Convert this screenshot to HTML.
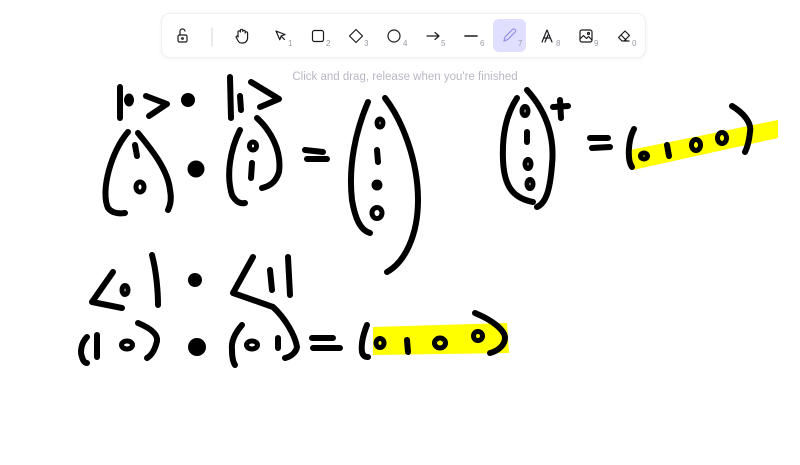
<!DOCTYPE html>
<html><head><meta charset="utf-8"><style>
html,body{margin:0;padding:0;background:#fff;width:800px;height:465px;overflow:hidden;font-family:"Liberation Sans",sans-serif}
.tb{position:absolute;left:162px;top:14px;width:483px;height:43px;background:#fff;border-radius:8px;box-shadow:0 0 0 1px #f0f0f3,0 1px 5px rgba(0,0,0,.09)}
.act{position:absolute;left:331px;top:5px;width:33px;height:33px;background:#e0dfff;border-radius:6px}
.hint{position:absolute;left:0;width:810px;top:71px;text-align:center;font-size:11.5px;color:#b8b8c4}
svg{position:absolute;left:0;top:0}
</style></head><body>
<div class="tb"><div class="act"></div></div>
<div class="hint">Click and drag, release when you're finished</div>
<svg width="800" height="465" viewBox="0 0 800 465">
<g fill="none" stroke="#1b1b1f" stroke-width="1.2" stroke-linecap="round" stroke-linejoin="round">
<rect x="178" y="35" width="9" height="7" rx="1.5"/><path d="M180 35v-3a2.5 2.5 0 0 1 5 -1"/><circle cx="182.5" cy="38.5" r=".8"/>
<path d="M212 28v18" stroke="#ddd"/>
<path d="M238 37v-5a1.2 1.2 0 0 1 2.4 0v-1.5a1.2 1.2 0 0 1 2.4 0v1a1.2 1.2 0 0 1 2.4 0v1.5a1.2 1.2 0 0 1 2.4 0v5a5 5 0 0 1 -5 5h-1a4 4 0 0 1 -3.4 -2l-2 -3.5a1.2 1.2 0 0 1 2 -1.2z"/>
<path d="M276 31l9 3.5-3.8 1.4-1.4 3.8z M281 36l3.5 3.5"/>
<rect x="312.5" y="30.5" width="11" height="11" rx="2"/>
<path d="M356 29.5l6.5 6.5-6.5 6.5-6.5-6.5z"/>
<circle cx="394" cy="36" r="6"/>
<path d="M427 36h12M435 32.5l4 3.5-4 3.5"/>
<path d="M465 36h12" stroke-width="1.6"/>
<path d="M504 41l1-4 7.5-7.5a1.8 1.8 0 0 1 2.6 2.6l-7.5 7.5z" stroke="#5b5bd6" stroke-opacity=".6"/>
<path d="M542 42l5-12 5 12M544 38h6M545 42l3-7"/>
<rect x="580" y="30" width="12" height="12" rx="2"/><path d="M580 39l3.5-3.5 3 3 2-2 3.5 3.5"/><circle cx="588.5" cy="33.5" r="1"/>
<path d="M622 41l-3.5-3.5 6.5-6.5 4.5 4.5-5.5 5.5zM621 35l5 5M622 41h7"/>
</g>
<g fill="#9a9aa3" font-size="8" font-family="Liberation Sans,sans-serif">
<text x="288" y="46">1</text><text x="326" y="46">2</text><text x="364" y="46">3</text><text x="403" y="46">4</text><text x="441" y="46">5</text><text x="480" y="46">6</text><text x="518" y="46">7</text><text x="556" y="46">8</text><text x="594" y="46">9</text><text x="632" y="46">0</text>
</g>
<g fill="#ffff00" stroke="none">
<path d="M630 150 L778 120 L778 138 L633 170 Z"/>
<path d="M373 327 L507 323 L509 353 L373 355 Z"/>
</g>
<g fill="none" stroke="#000" stroke-width="6" stroke-linecap="round" stroke-linejoin="round">
<path d="M120 87 L120 118"/><path d="M146 96 L167 104 L149 116"/>
<path d="M230 77 L231 118"/><path d="M240 96 L241 110"/><path d="M251 82 L279 99 L260 107"/>
<path d="M128 132 C112 150 100 190 108 208 C112 213 118 214 125 213"/>
<path d="M138 133 C152 150 168 170 170 190 C172 200 170 206 168 210"/>
<path d="M135 145 L137 156"/>
<path d="M240 130 C230 150 226 175 232 195 C236 202 240 204 245 203"/>
<path d="M257 118 C270 130 282 150 279 172 C276 182 270 186 262 188"/>
<path d="M252 163 L251 178"/>
<path d="M305 150 L323 152 M307 159 L327 159"/>
<path d="M368 102 C356 130 348 165 352 200 C355 218 360 230 370 233"/>
<path d="M385 98 C402 120 418 160 418 200 C418 235 405 262 387 272"/>
<path d="M377 150 L378 162"/>
<path d="M517 98 C506 115 502 135 503 160 C504 185 512 198 533 202"/>
<path d="M527 90 C545 110 555 135 552 165 C550 190 546 203 537 207"/>
<path d="M527 132 L527 142"/>
<path d="M560 100 L561 118 M553 107 L568 106"/>
<path d="M590 138 L608 138 M592 148 L610 147"/>
<path d="M634 129 C628 140 627 160 632 167"/><path d="M667 145 L669 156"/>
<path d="M732 106 C742 112 752 122 750 132 C749 142 747 148 745 152"/>
<path d="M113 272 L92 302 L122 308"/><path d="M152 255 C156 270 158 290 158 305"/>
<path d="M253 257 L233 293 L273 307 C285 318 295 335 297 347 C296 353 290 357 285 358"/>
<path d="M270 270 L272 290 M288 257 L290 295"/>
<path d="M87 337 C81 343 80 352 82 357 C83 361 85 363 87 363"/><path d="M97 335 L97 357"/>
<path d="M138 323 C150 328 158 334 157 341 C155 350 152 355 147 358"/>
<path d="M242 325 C235 333 231 342 232 350 C232 358 233 362 235 365"/><path d="M278 338 L278 348"/>
<path d="M312 338 L333 338 M313 348 L340 348"/>
<path d="M367 325 C363 335 361 345 362 352 C363 356 365 357 368 357"/><path d="M407 340 L408 352"/>
<path d="M475 313 C492 320 505 330 505 338 C505 345 498 351 490 353"/>
</g>
<g fill="none" stroke="#000" stroke-width="5">
<ellipse cx="129" cy="100" rx="2.5" ry="4"/>
<ellipse cx="140" cy="187" rx="4" ry="5"/>
<ellipse cx="253" cy="146" rx="3.5" ry="4"/>
<ellipse cx="380" cy="123" rx="3" ry="4"/><ellipse cx="377" cy="213" rx="5" ry="5.5"/>
<ellipse cx="525" cy="111" rx="3" ry="4.5"/><ellipse cx="528" cy="164" rx="3" ry="4.5"/><ellipse cx="530" cy="184" rx="3" ry="4.5"/>
<ellipse cx="644" cy="156" rx="3.5" ry="3"/><ellipse cx="696" cy="145" rx="4.5" ry="5.5"/><ellipse cx="722" cy="138" rx="4.5" ry="5.5"/>
<ellipse cx="125" cy="290" rx="3" ry="4.5"/><ellipse cx="127" cy="345" rx="5.5" ry="4"/>
<ellipse cx="252" cy="345" rx="5.5" ry="4"/>
<ellipse cx="380" cy="343" rx="4" ry="4.5"/><ellipse cx="440" cy="343" rx="5.5" ry="5"/><ellipse cx="478" cy="336" rx="4.5" ry="4.5"/>
</g>
<g fill="#000">
<circle cx="188" cy="100" r="7"/><circle cx="196" cy="169" r="8.5"/><circle cx="377" cy="185" r="5.5"/>
<circle cx="195" cy="280" r="7"/><circle cx="197" cy="347" r="9"/>
</g>
</svg>
</body></html>
